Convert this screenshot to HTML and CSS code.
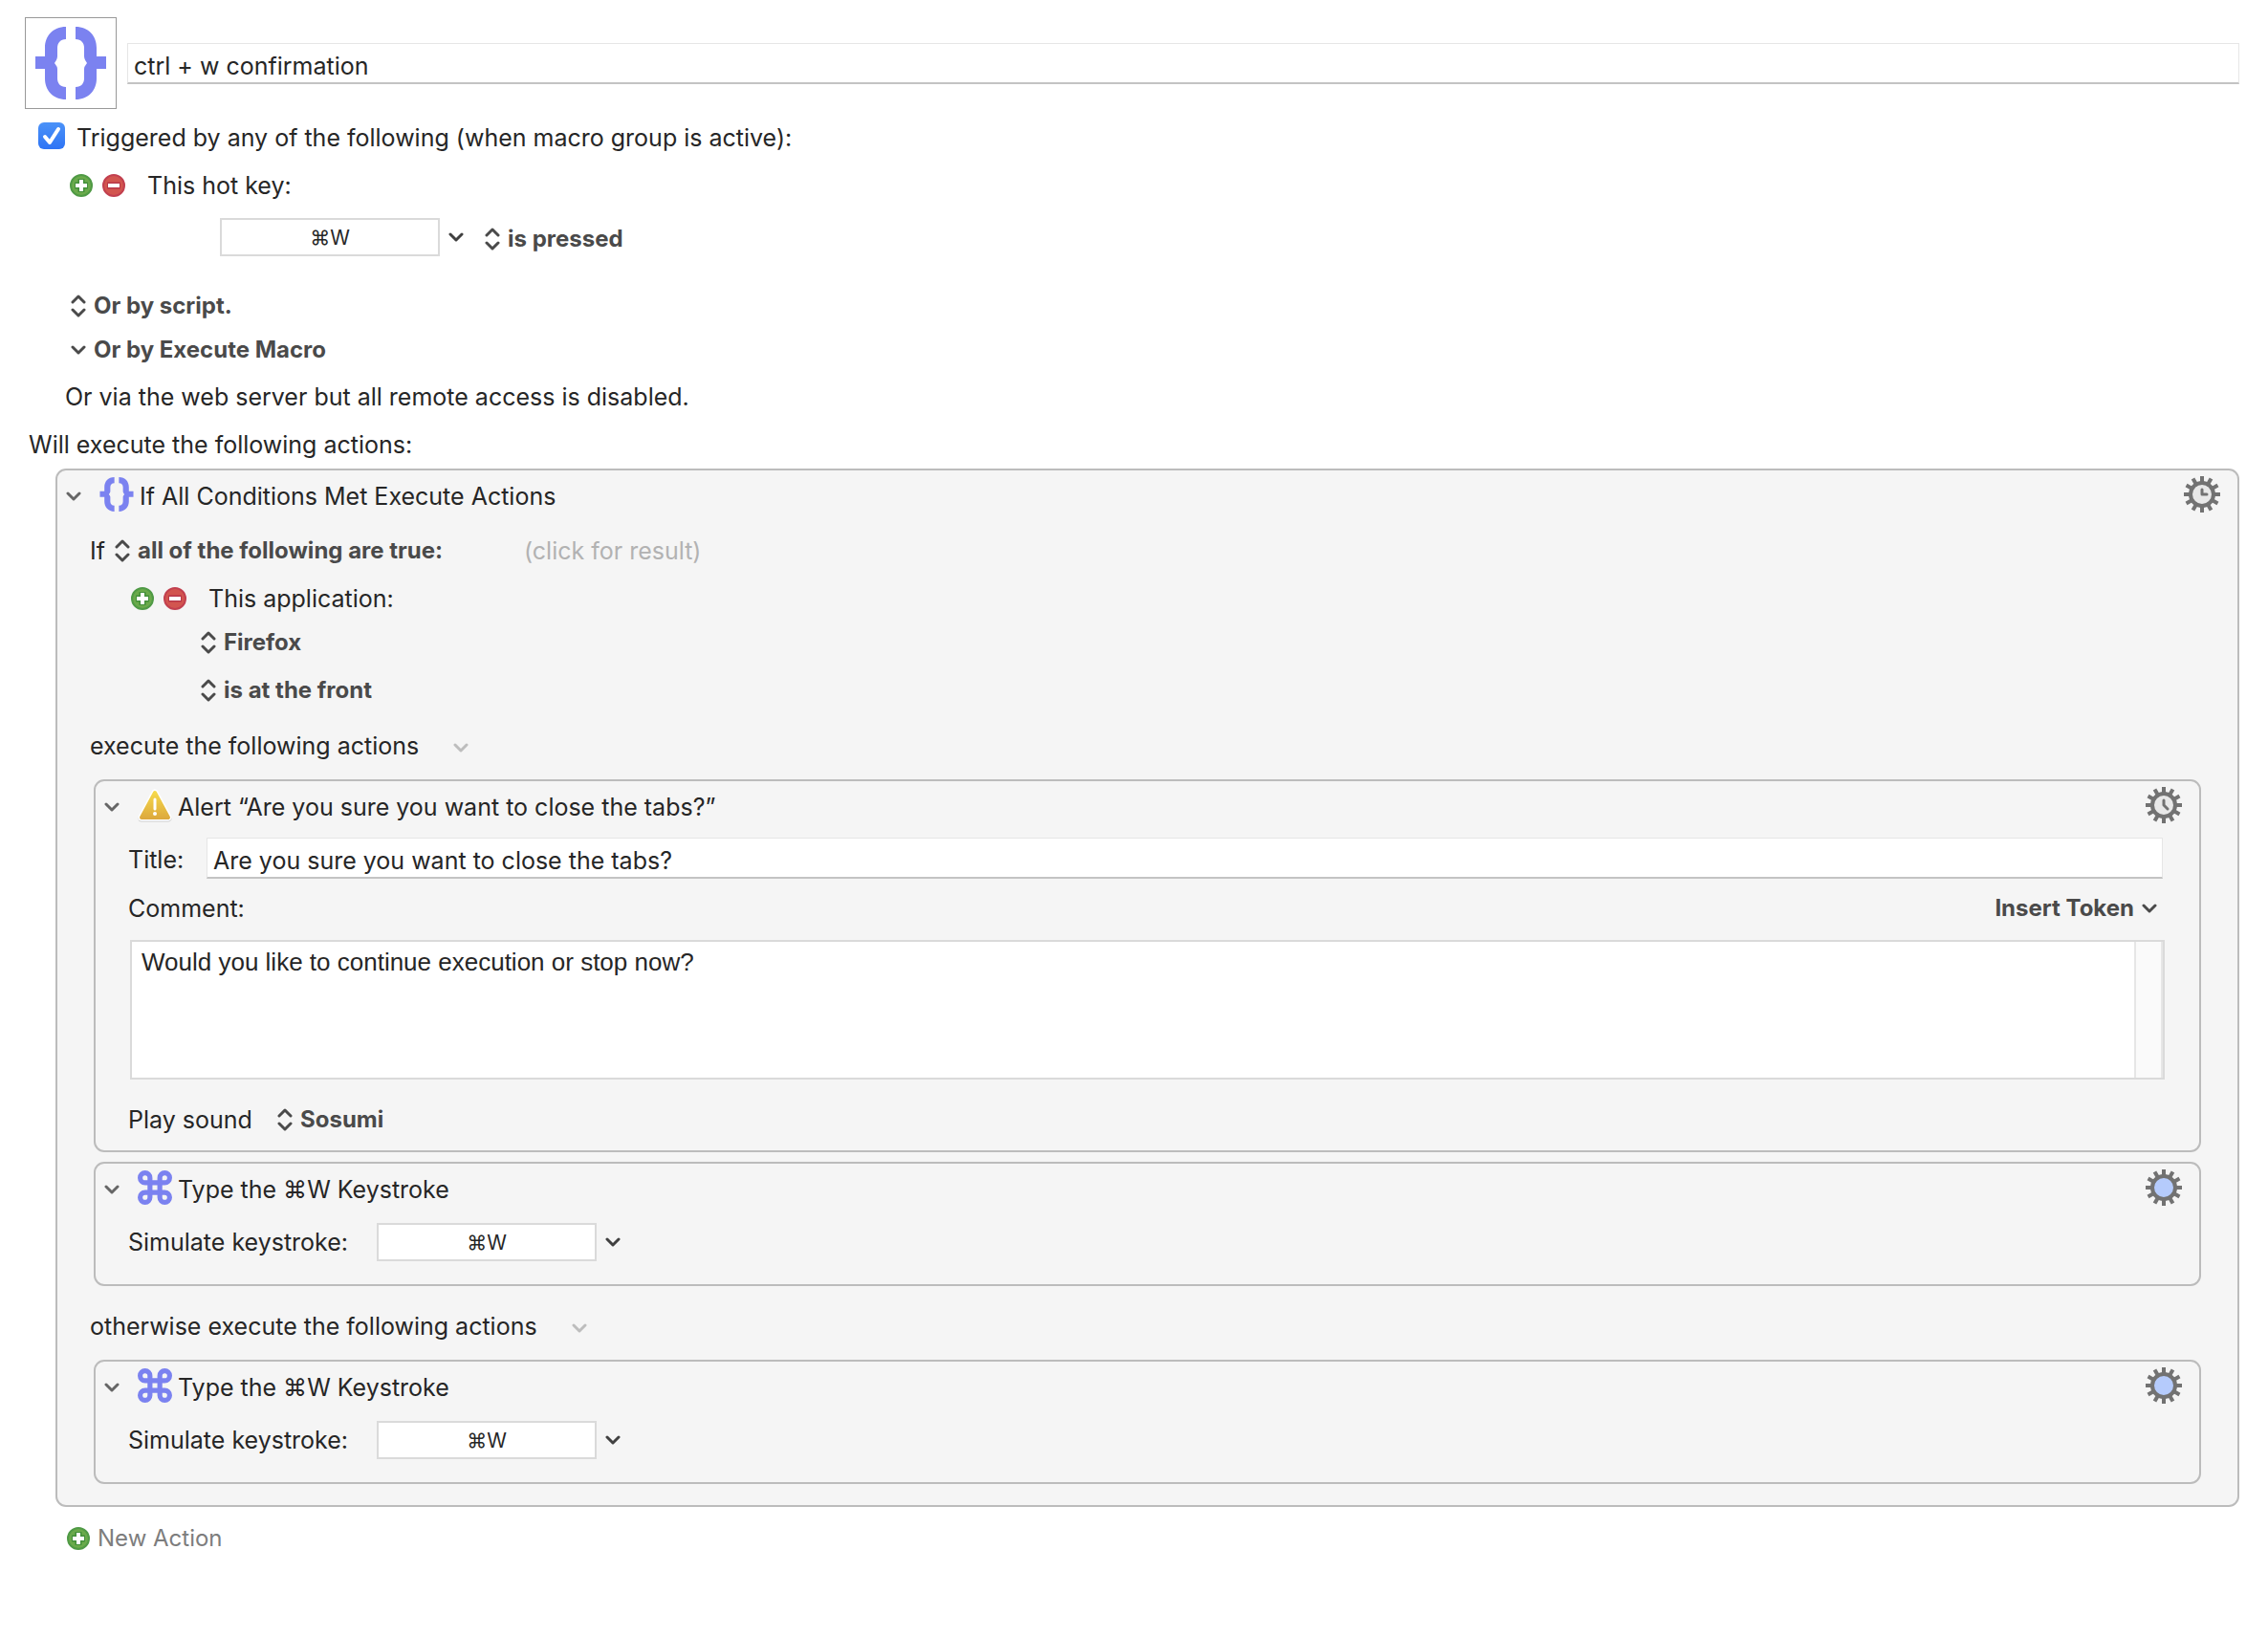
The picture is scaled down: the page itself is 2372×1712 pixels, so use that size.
FILE: index.html
```
<!DOCTYPE html>
<html lang="en">

<head>
    <meta charset="UTF-8">
    <meta name="viewport" content="width=device-width, initial-scale=1.0">
    <title>ctrl + w confirmation</title>
    <link rel="stylesheet" href="styles.css">
</head>

<body>
    <!-- shared icons -->
    <svg class="sprite" width="0" height="0" aria-hidden="true">
        <defs>
            <linearGradient id="warnFill" gradientUnits="userSpaceOnUse" x1="0" y1="2" x2="0" y2="34">
                <stop offset="0" stop-color="#f8dd4c" />
                <stop offset="1" stop-color="#dba63c" />
            </linearGradient>
            <path id="brace" d="M32 0C18 0 10 10 10 22V31H0V44H10V54C10 66 18 76 32 76V63C26 63 23 59 23 54V44C23 41 21 40 20 38C21 36 23 34 23 31V22C23 17 26 13 32 13Z" />
        </defs>
        <symbol id="braces" viewBox="0 0 74 76">
            <use href="#brace" />
            <use href="#brace" transform="translate(74 0) scale(-1 1)" />
        </symbol>
        <symbol id="command" viewBox="0 0 35 35">
            <path d="M22.5 7.5v20a5 5 0 1 0 5-5h-20a5 5 0 1 0 5 5v-20a5 5 0 1 0-5 5h20a5 5 0 1 0-5-5z" fill="none" stroke="currentColor" stroke-width="5" />
        </symbol>
        <symbol id="warning" viewBox="0 0 36 36">
            <path d="M18 6L32 32H4Z" fill="#cfcfcf" stroke="#cfcfcf" stroke-width="7" stroke-linejoin="round" />
            <path d="M18 5L32 31H4Z" fill="#fff" stroke="#fff" stroke-width="7" stroke-linejoin="round" />
            <path d="M18 5L32 31H4Z" fill="url(#warnFill)" stroke="url(#warnFill)" stroke-width="4" stroke-linejoin="round" />
            <path d="M18 12v10" stroke="#fff" stroke-width="3" stroke-linecap="round" />
            <circle cx="18" cy="27" r="2" fill="#fff" />
        </symbol>
        <symbol id="gear" viewBox="0 0 38 38">
            <g stroke="#727272" stroke-width="4">
                <path d="M19 0V38" />
                <path d="M19 0V38" transform="rotate(30 19 19)" />
                <path d="M19 0V38" transform="rotate(60 19 19)" />
                <path d="M19 0V38" transform="rotate(90 19 19)" />
                <path d="M19 0V38" transform="rotate(120 19 19)" />
                <path d="M19 0V38" transform="rotate(150 19 19)" />
            </g>
            <circle cx="19" cy="19" r="12" fill="currentColor" stroke="#727272" stroke-width="4" />
        </symbol>
        <symbol id="plus" viewBox="0 0 24 24">
            <circle cx="12" cy="12" r="11" fill="#6aaa4b" stroke="#4f9a45" stroke-width="2" />
            <path d="M12 5v14M5 12h14" stroke="#43903b" stroke-width="7" />
            <path d="M12 6v12M6 12h12" stroke="#fff" stroke-width="4" />
        </symbol>
        <symbol id="minus" viewBox="0 0 24 24">
            <circle cx="12" cy="12" r="11" fill="#d2554f" stroke="#c2404f" stroke-width="2" />
            <path d="M5 12h14" stroke="#b93648" stroke-width="7" />
            <path d="M6 12h12" stroke="#fff" stroke-width="4" />
        </symbol>
        <symbol id="down" viewBox="0 0 16 10">
            <path d="M2 2L8 8L14 2" fill="none" stroke="currentColor" stroke-width="3" stroke-linecap="round" stroke-linejoin="round" />
        </symbol>
        <symbol id="updown" viewBox="0 0 16 24">
            <path d="M2 8L8 2L14 8M2 16L8 22L14 16" fill="none" stroke="currentColor" stroke-width="3" stroke-linecap="round" stroke-linejoin="round" />
        </symbol>
    </svg>

    <main class="macro">
        <header class="macro-head">
            <button class="macro-icon" aria-label="Macro icon"><svg width="74" height="76"><use href="#braces" /></svg></button>
            <input class="field grow" type="text" value="ctrl + w confirmation" aria-label="Macro name">
        </header>

        <section class="triggers">
            <div class="row trigger-toggle">
                <input class="check" type="checkbox" id="triggered" checked>
                <label for="triggered">Triggered by any of the following (when macro group is active):</label>
            </div>
            <div class="row hotkey-title">
                <button class="round" aria-label="Add trigger"><svg width="24" height="24"><use href="#plus" /></svg></button>
                <button class="round" aria-label="Remove trigger"><svg width="24" height="24"><use href="#minus" /></svg></button>
                <span class="after-buttons">This hot key:</span>
            </div>
            <div class="row hotkey">
                <input class="key" type="text" value="⌘W" aria-label="Hot key">
                <button class="arrow" aria-label="Hot key menu"><svg width="16" height="10"><use href="#down" /></svg></button>
                <label class="popup"><svg width="16" height="24"><use href="#updown" /></svg><select aria-label="Key state"><option>is pressed</option></select></label>
            </div>
            <div class="row script">
                <label class="popup"><svg width="16" height="24"><use href="#updown" /></svg><select aria-label="Script trigger"><option>Or by script.</option></select></label>
            </div>
            <div class="row execute-macro">
                <button class="popup"><svg width="16" height="10"><use href="#down" /></svg>Or by Execute Macro</button>
            </div>
            <p class="web-note">Or via the web server but all remote access is disabled.</p>
        </section>

        <p class="actions-title">Will execute the following actions:</p>

        <section class="action">
            <header class="action-head">
                <button class="arrow thin" aria-label="Collapse"><svg width="16" height="12"><use href="#down" /></svg></button>
                <svg class="kind" width="36" height="36"><use href="#braces" /></svg>
                <h2>If All Conditions Met Execute Actions</h2>
                <button class="gear" aria-label="Action options"><svg width="38" height="38"><use href="#gear" /><path d="M19 14v5h5" /></svg></button>
            </header>

            <div class="row if-row">
                <span>If</span>
                <label class="popup"><svg width="16" height="24"><use href="#updown" /></svg><select aria-label="Match"><option>all of the following are true:</option></select></label>
                <button class="result">(click for result)</button>
            </div>
            <div class="row condition">
                <button class="round" aria-label="Add condition"><svg width="24" height="24"><use href="#plus" /></svg></button>
                <button class="round" aria-label="Remove condition"><svg width="24" height="24"><use href="#minus" /></svg></button>
                <span class="after-buttons">This application:</span>
            </div>
            <div class="row app">
                <label class="popup"><svg width="16" height="24"><use href="#updown" /></svg><select aria-label="Application"><option>Firefox</option></select></label>
            </div>
            <div class="row app-state">
                <label class="popup"><svg width="16" height="24"><use href="#updown" /></svg><select aria-label="Application state"><option>is at the front</option></select></label>
            </div>

            <div class="row branch">
                <span>execute the following actions</span>
                <button class="arrow faint" aria-label="Actions menu"><svg width="16" height="12"><use href="#down" /></svg></button>
            </div>
            <div class="branch-list">
                <section class="action alert">
                    <header class="action-head">
                        <button class="arrow thin" aria-label="Collapse"><svg width="16" height="12"><use href="#down" /></svg></button>
                        <svg class="kind" width="36" height="36"><use href="#warning" /></svg>
                        <h2>Alert “Are you sure you want to close the tabs?”</h2>
                        <button class="gear" aria-label="Action options"><svg width="38" height="38"><use href="#gear" /><path d="M19 14v5l4 4" /></svg></button>
                    </header>
                    <div class="row title-row">
                        <label for="alertTitle">Title:</label>
                        <input class="field grow" id="alertTitle" type="text" value="Are you sure you want to close the tabs?">
                    </div>
                    <div class="row comment-row">
                        <label for="comment">Comment:</label>
                        <button class="popup">Insert Token<svg width="16" height="10"><use href="#down" /></svg></button>
                    </div>
                    <div class="comment-box">
                        <textarea id="comment">Would you like to continue execution or stop now?</textarea>
                        <div class="track"></div>
                    </div>
                    <div class="row sound-row">
                        <label for="sound">Play sound</label>
                        <div class="popup"><svg width="16" height="24"><use href="#updown" /></svg><select id="sound"><option>Sosumi</option></select></div>
                    </div>
                </section>

                <section class="action keystroke">
                    <header class="action-head">
                        <button class="arrow thin" aria-label="Collapse"><svg width="16" height="12"><use href="#down" /></svg></button>
                        <svg class="kind" width="36" height="36"><use href="#command" /></svg>
                        <h2>Type the ⌘W Keystroke</h2>
                        <button class="gear blue" aria-label="Action options"><svg width="38" height="38"><use href="#gear" /></svg></button>
                    </header>
                    <div class="row key-row">
                        <label for="key1">Simulate keystroke:</label>
                        <input class="key" id="key1" type="text" value="⌘W">
                        <button class="arrow" aria-label="Keystroke menu"><svg width="16" height="10"><use href="#down" /></svg></button>
                    </div>
                </section>
            </div>

            <div class="row branch">
                <span>otherwise execute the following actions</span>
                <button class="arrow faint" aria-label="Actions menu"><svg width="16" height="12"><use href="#down" /></svg></button>
            </div>
            <div class="branch-list">
                <section class="action keystroke">
                    <header class="action-head">
                        <button class="arrow thin" aria-label="Collapse"><svg width="16" height="12"><use href="#down" /></svg></button>
                        <svg class="kind" width="36" height="36"><use href="#command" /></svg>
                        <h2>Type the ⌘W Keystroke</h2>
                        <button class="gear blue" aria-label="Action options"><svg width="38" height="38"><use href="#gear" /></svg></button>
                    </header>
                    <div class="row key-row">
                        <label for="key2">Simulate keystroke:</label>
                        <input class="key" id="key2" type="text" value="⌘W">
                        <button class="arrow" aria-label="Keystroke menu"><svg width="16" height="10"><use href="#down" /></svg></button>
                    </div>
                </section>
            </div>
        </section>

        <button class="new-action"><svg width="24" height="24"><use href="#plus" /></svg>New Action</button>
    </main>
</body>

</html>
```
FILE: styles.css
```
* {
    box-sizing: border-box;
}

body {
    margin: 0;
    background-color: #fff;
    color: #262626;
    font-family: Inter, "Liberation Sans", sans-serif;
    font-size: 25px;
    line-height: 32px;
}

button,
input,
select,
textarea {
    margin: 0;
    padding: 0;
    border: none;
    background: none;
    color: inherit;
    font: inherit;
}

svg {
    display: block;
    flex-shrink: 0;
}

.sprite {
    position: absolute;
}

h2,
p {
    margin: 0;
    font-size: inherit;
    font-weight: normal;
}

.macro {
    padding: 18px 30px 18px 26px;
}

.macro-head {
    display: flex;
    align-items: center;
    gap: 11px;
}

.macro-icon {
    display: flex;
    align-items: center;
    justify-content: center;
    width: 96px;
    height: 96px;
    border: 1px solid #999;
    color: #7b82f0;
    fill: currentColor;
}

.grow {
    flex: 1;
    min-width: 0;
}

.field {
    height: 43px;
    padding: 6px 6px 0;
    border: 1px solid #e6e6e6;
    border-bottom: 2px solid #c3c3c3;
    background-color: #fff;
}

.row {
    display: flex;
    align-items: center;
    min-height: 32px;
}

/* triggers */

.trigger-toggle {
    gap: 12px;
    padding-left: 14px;
    margin-top: 14px;
}

.check {
    appearance: none;
    width: 28px;
    height: 28px;
    margin-bottom: 4px;
    border-radius: 6px;
    background: url("data:image/svg+xml,%3Csvg xmlns='http://www.w3.org/2000/svg' viewBox='0 0 28 28'%3E%3Cpath d='M7 15l5 6L21 7' fill='none' stroke='white' stroke-width='4' stroke-linecap='round' stroke-linejoin='round'/%3E%3C/svg%3E"), linear-gradient(#4b92f8, #2e74f5);
}

.hotkey-title {
    gap: 10px;
    padding-left: 47px;
    margin-top: 18px;
}

.after-buttons {
    margin-left: 13px;
}

.hotkey {
    padding-left: 204px;
    margin-top: 18px;
}

.hotkey .popup {
    margin-left: 22px;
    padding-top: 3px;
}

.key {
    width: 230px;
    height: 40px;
    border: 2px solid #dadada;
    background-color: #fff;
    font-size: 21px;
    text-align: center;
}

.arrow {
    color: #404040;
}

.key + .arrow {
    margin-left: 9px;
}

.popup {
    display: flex;
    align-items: center;
    gap: 8px;
    color: #4a4a4a;
    font-size: 24px;
    font-weight: 700;
}

.popup select {
    appearance: none;
    height: 32px;
}

.script {
    padding-left: 48px;
    margin-top: 36px;
}

.execute-macro {
    padding-left: 48px;
    margin-top: 14px;
}

.web-note {
    padding-left: 42px;
    margin-top: 17px;
}

.actions-title {
    padding-left: 4px;
    margin-top: 18px;
}

/* action boxes */

.action {
    border: 2px solid #bcbcbc;
    border-radius: 11px;
    background-color: #f5f5f5;
}

.macro > .action {
    margin: 9px 0 0 32px;
    padding-bottom: 22px;
}

.action-head {
    display: flex;
    align-items: center;
    height: 50px;
    padding: 0 18px 0 9px;
}

.action-head h2,
.thin {
    padding-top: 4px;
}

.thin {
    color: #666;
}

.kind {
    margin: 0 6px 0 19px;
    color: #7b82f0;
    fill: currentColor;
}

.gear {
    margin-left: auto;
    color: #e8e8e8;
}

.gear path {
    fill: none;
    stroke: #727272;
    stroke-width: 3;
    stroke-linecap: round;
    stroke-linejoin: round;
}

.gear.blue {
    color: #b5cbfc;
}

.if-row {
    gap: 10px;
    padding-left: 34px;
    margin-top: 18px;
}

.result {
    margin-left: 74px;
    color: #b2b2b2;
}

.condition {
    gap: 10px;
    padding-left: 77px;
    margin-top: 18px;
}

.app {
    padding-left: 150px;
    margin-top: 14px;
}

.app-state {
    padding-left: 150px;
    margin-top: 18px;
}

.branch {
    gap: 36px;
    padding-left: 34px;
    margin-top: 26px;
}

.faint {
    padding-top: 4px;
    color: #bdbdbd;
}

.branch-list {
    display: flex;
    flex-direction: column;
    gap: 10px;
    margin-top: 19px;
    padding: 0 38px;
}

.alert {
    padding-bottom: 16px;
}

.title-row {
    gap: 22px;
    margin-top: 9px;
    padding: 0 38px 0 34px;
}

.title-row label {
    min-width: 60px;
    padding-top: 3px;
}

.comment-row {
    justify-content: space-between;
    margin-top: 15px;
    padding: 0 44px 0 34px;
}

.comment-box {
    display: flex;
    height: 146px;
    margin: 17px 36px 0;
    border: 2px solid #dadada;
    background-color: #fff;
}

.comment-box textarea {
    flex: 1;
    padding: 5px 10px;
    resize: none;
    font-family: "Liberation Sans", Arial, sans-serif;
    font-size: 26px;
}

.track {
    width: 30px;
    border: 2px solid #e6e6e6;
    border-width: 0 2px;
    background-color: #fafafa;
}

.sound-row {
    gap: 24px;
    margin-top: 26px;
    padding-left: 34px;
}

.sound-row label {
    min-width: 132px;
}

.keystroke {
    padding-bottom: 24px;
}

.key-row {
    margin-top: 12px;
    padding-left: 34px;
}

.key-row label {
    min-width: 236px;
    margin-right: 24px;
}

.new-action {
    display: flex;
    align-items: center;
    gap: 8px;
    margin: 17px 0 0 44px;
    color: #7d7d7d;
    font-size: 24px;
}
```
